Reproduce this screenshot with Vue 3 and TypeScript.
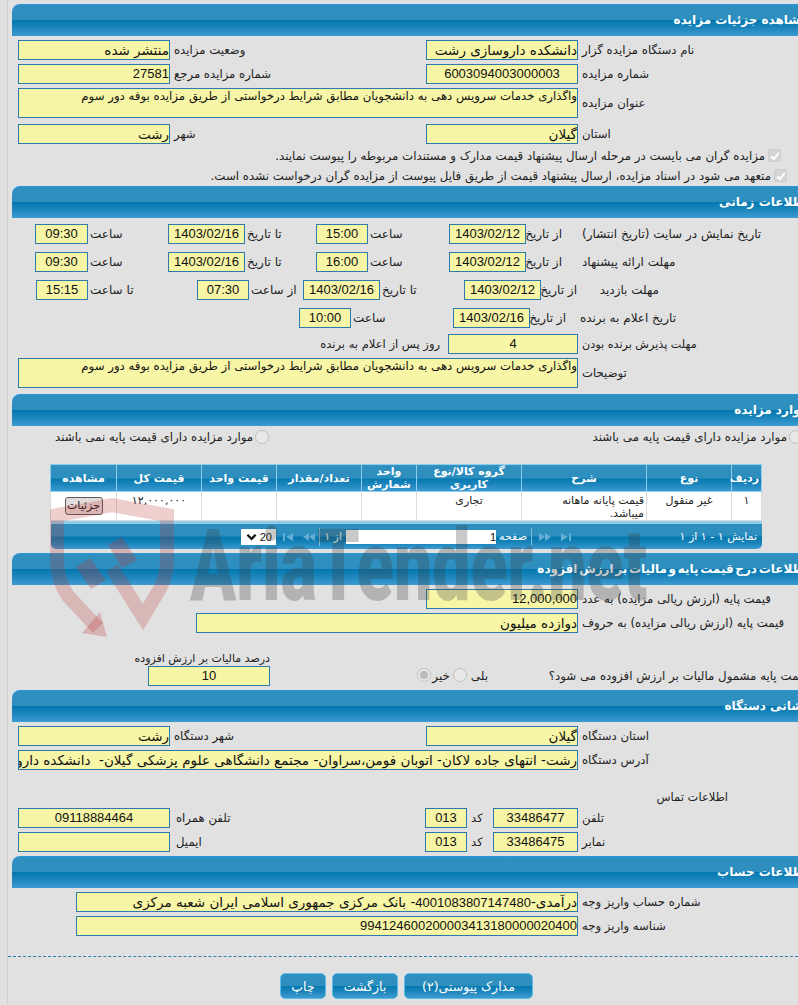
<script setup lang="ts">
const titleText = 'واگذاری خدمات سرویس دهی به دانشجویان مطابق شرایط درخواستی از طریق مزایده بوفه دور سوم'
const columns: string[] = ['ردیف', 'نوع', 'شرح', 'گروه کالا/نوع کاربری', 'واحد شمارش', 'تعداد/مقدار', 'قیمت واحد', 'قیمت کل', 'مشاهده']
</script>

<template>
  <div class="page" dir="rtl">
    <div class="rail"></div>

    <h2 class="hd first">مشاهده جزئیات مزایده</h2>
    <div class="row m4"><span class="lb">نام دستگاه مزایده گزار</span><span class="f w152">دانشکده داروسازی رشت</span><span class="lb w256">وضعیت مزایده</span><span class="f w152">منتشر شده</span></div>
    <div class="row m4"><span class="lb">شماره مزایده</span><span class="f w152 c num">6003094003000003</span><span class="lb w256">شماره مزایده مرجع</span><span class="f w152 num">27581</span></div>
    <div class="row m4"><span class="lb">عنوان مزایده</span><span class="f area w560">{{ titleText }}</span></div>
    <div class="row m6"><span class="lb">استان</span><span class="f w152">گیلان</span><span class="lb w256">شهر</span><span class="f w152">رشت</span></div>
    <div class="chk chk1"><span class="box"><svg viewBox="0 0 14 14" width="12" height="12"><path d="M2.5 7.5 L5.6 10.6 L11.5 3.4" fill="none" stroke="#fff" stroke-width="2.4" /></svg></span><span>مزایده گران می بایست در مرحله ارسال پیشنهاد قیمت مدارک و مستندات مربوطه را پیوست نمایند.</span></div>
    <div class="chk chk2"><span class="box"><svg viewBox="0 0 14 14" width="12" height="12"><path d="M2.5 7.5 L5.6 10.6 L11.5 3.4" fill="none" stroke="#fff" stroke-width="2.4" /></svg></span><span>متعهد می شود در اسناد مزایده، ارسال پیشنهاد قیمت از طریق فایل پیوست از مزایده گران درخواست نشده است.</span></div>

    <h2 class="hd">اطلاعات زمانی</h2>
    <div class="tr m6"><span class="lb t1">تاریخ نمایش در سایت (تاریخ انتشار)</span><span class="lb w36">از تاریخ</span><span class="f w77 c num">1403/02/12</span><span class="lb w81">ساعت</span><span class="f w52 c num">15:00</span><span class="lb w71">تا تاریخ</span><span class="f w77 c num">1403/02/16</span><span class="lb w80">ساعت</span><span class="f w53 c num">09:30</span></div>
    <div class="tr m8"><span class="lb t1">مهلت ارائه پیشنهاد</span><span class="lb w36">از تاریخ</span><span class="f w77 c num">1403/02/12</span><span class="lb w81">ساعت</span><span class="f w52 c num">16:00</span><span class="lb w71">تا تاریخ</span><span class="f w77 c num">1403/02/16</span><span class="lb w80">ساعت</span><span class="f w53 c num">09:30</span></div>
    <div class="tr m8 tr3"><span class="lb t3">مهلت بازدید</span><span class="lb w36">از تاریخ</span><span class="f w77 c num">1403/02/12</span><span class="lb w84">تا تاریخ</span><span class="f w77 c num">1403/02/16</span><span class="lb w54">از ساعت</span><span class="f w52 c num">07:30</span><span class="lb w109">تا ساعت</span><span class="f w52 c num">15:15</span></div>
    <div class="tr m8 tr4"><span class="lb t4">تاریخ اعلام به برنده</span><span class="lb w36">از تاریخ</span><span class="f w77 c num">1403/02/16</span><span class="lb w102">ساعت</span><span class="f w52 c num">10:00</span></div>
    <div class="tr m6 tr5"><span class="lb t5">مهلت پذیرش برنده بودن</span><span class="f w130 c num">4</span><span class="lb after">روز پس از اعلام به برنده</span></div>
    <div class="row m4"><span class="lb">توضیحات</span><span class="f area w560">{{ titleText }}</span></div>

    <h2 class="hd m6">موارد مزایده</h2>
    <div class="radios">
      <label class="rad-item edge"><span class="radio"></span><span>موارد مزایده دارای قیمت پایه می باشند</span></label>
      <label class="rad-item"><span class="radio"></span><span>موارد مزایده دارای قیمت پایه نمی باشند</span></label>
    </div>

    <div class="grid-wrap">
      <table class="grid">
        <colgroup>
          <col class="c1" /><col class="c2" /><col class="c3" /><col class="c4" /><col class="c5" /><col class="c6" /><col class="c7" /><col class="c8" /><col class="c9" />
        </colgroup>
        <thead>
          <tr><th v-for="c in columns" :key="c">{{ c }}</th></tr>
        </thead>
        <tbody>
          <tr>
            <td>۱</td>
            <td>غیر منقول</td>
            <td class="desc">قیمت پایانه ماهانه میباشد.</td>
            <td>تجاری</td>
            <td></td>
            <td></td>
            <td></td>
            <td>۱۲,۰۰۰,۰۰۰</td>
            <td class="btn-cell"><button class="mini" type="button">جزئیات</button></td>
          </tr>
        </tbody>
      </table>
      <div class="pager">
        <span class="pg-info">نمایش ۱ - ۱ از ۱</span>
        <svg class="pg-ic ic1" viewBox="0 0 10 8" width="10" height="8"><path d="M0 0 L7 4 L0 8 Z M8 0 H10 V8 H8 Z" /></svg>
        <svg class="pg-ic ic2" viewBox="0 0 12 8" width="12" height="8"><path d="M0 0 L6 4 L0 8 Z M6 0 L12 4 L6 8 Z" /></svg>
        <span class="sep"></span>
        <span class="pg-word">صفحه</span>
        <span class="pg-input num">1</span>
        <span class="pg-of">از ۱</span>
        <span class="sep sep2"></span>
        <svg class="pg-ic ic3" viewBox="0 0 12 8" width="12" height="8"><path d="M12 0 L6 4 L12 8 Z M6 0 L0 4 L6 8 Z" /></svg>
        <svg class="pg-ic ic4" viewBox="0 0 10 8" width="10" height="8"><path d="M10 0 L3 4 L10 8 Z M0 0 H2 V8 H0 Z" /></svg>
        <span class="pg-select">
          <span class="pg-num num">20</span>
          <svg viewBox="0 0 12 8" width="11" height="8"><path d="M1.5 1.5 L6 6 L10.5 1.5" fill="none" stroke="#111" stroke-width="2.4" /></svg>
        </span>
      </div>
    </div>

    <h2 class="hd m5 tight">اطلاعات درج قیمت پایه و مالیات بر ارزش افزوده</h2>
    <div class="row m4 pl426"><span class="lb">قیمت پایه (ارزش ریالی مزایده) به عدد</span><span class="f w152 num">12,000,000</span></div>
    <div class="row m4 pl196"><span class="lb">قیمت پایه (ارزش ریالی مزایده) به حروف</span><span class="f w382">دوازده میلیون</span></div>
    <div class="taxrow">
      <span class="q">قیمت پایه مشمول مالیات بر ارزش افزوده می شود؟</span>
      <span class="opt opt1">بلی</span><span class="radio"></span>
      <span class="opt opt2">خیر</span><span class="radio on"></span>
      <div class="taxcol">
        <span class="taxlb">درصد مالیات بر ارزش افزوده</span>
        <span class="f w122 c num">10</span>
      </div>
    </div>

    <h2 class="hd m4">نشانی دستگاه</h2>
    <div class="row m4"><span class="lb">استان دستگاه</span><span class="f w152">گیلان</span><span class="lb w256">شهر دستگاه</span><span class="f w152">رشت</span></div>
    <div class="row m4"><span class="lb">آدرس دستگاه</span><span class="f w560 clip">رشت- انتهای جاده لاکان- اتوبان فومن،سراوان- مجتمع دانشگاهی علوم پزشکی گیلان-&nbsp; دانشکده داروسازی</span></div>
    <div class="contact">اطلاعات تماس</div>
    <div class="row m4"><span class="lb">تلفن</span><span class="f w85 c num">33486477</span><span class="lb w26">کد</span><span class="f w42 c num">013</span><span class="lb w255">تلفن همراه</span><span class="f w152 c num">09118884464</span></div>
    <div class="row m4"><span class="lb">نمابر</span><span class="f w85 c num">33486475</span><span class="lb w26">کد</span><span class="f w42 c num">013</span><span class="lb w255">ایمیل</span><span class="f w152"></span></div>

    <h2 class="hd m4">اطلاعات حساب</h2>
    <div class="row m4 pl76"><span class="lb">شماره حساب واریز وجه</span><span class="f w502">درآمدی-<span class="num">4001083807147480</span>- بانک مرکزی جمهوری اسلامی ایران شعبه مرکزی</span></div>
    <div class="row m4 pl76"><span class="lb">شناسه واریز وجه</span><span class="f w502 num">994124600200003413180000020400</span></div>

    <div class="dash"></div>
    <div class="actions">
      <button class="act a1" type="button">مدارک پیوستی(۲)</button>
      <button class="act a2" type="button">بازگشت</button>
      <button class="act a3" type="button">چاپ</button>
    </div>

    <div class="wm" aria-hidden="true">
      <svg class="wm-logo" viewBox="0 0 798 1005" width="798" height="1005">
        <path d="M98 628 L68 596 Q57 580 57 560 L57 515 L112 505 L167 515 L167 560 Q167 580 155 597 L143 617 L112 568" fill="none" stroke="rgba(190,50,50,.24)" stroke-width="14" />
        <path d="M100 612 L107 637 L82 633 Z" fill="rgba(190,50,50,.26)" />
        <path d="M108 545 L122 537 L137 560 L122 568 Z M76 567 L90 558 L106 580 L91 589 Z" fill="rgba(190,50,50,.28)" />
      </svg>
      <span class="wm-text" dir="ltr">AriaTender.net</span>
    </div>
  </div>
</template>

<style>
html, body { margin: 0; background: #e1e1e1; }
</style>

<style scoped>
.page {
  position: relative;
  width: 798px;
  height: 1005px;
  overflow: hidden;
  background: #e1e1e1;
  font-family: "DejaVu Sans", sans-serif;
  font-size: 12px;
  color: #222;
  padding-top: 4px;
  box-sizing: border-box;
}
.rail { position: absolute; left: 7px; top: 0; bottom: 0; width: 1px; background: #cdcdcd; }

.hd {
  height: 32px;
  margin: 0 -12px 0 0;
  margin-left: 12px;
  padding: 0 2px 0 0;
  box-sizing: border-box;
  border-top: 1px solid #2a97dd;
  border-top-left-radius: 8px;
  background: linear-gradient(#2f90c0 0, #2e8ebd 49%, #0378b0 50%, #1f87bd 75%, #3d9bd2 100%);
  color: #fff;
  font-size: 12px;
  font-weight: bold;
  line-height: 31px;
  white-space: nowrap;
}
.tight { word-spacing: -2.5px; }
.m4 { margin-top: 4px; }
.m5 { margin-top: 5px; }
.m6 { margin-top: 6px; }
.m8 { margin-top: 8px; }

.row, .tr { display: flex; justify-content: flex-end; align-items: center; }
.row { padding-left: 18px; }
.tr { padding-left: 35px; }
.tr3 { padding-left: 36px; }
.tr4 { padding-left: 299px; }
.tr5 { padding-left: 321px; }
.pl426 { padding-left: 426px; }
.pl196 { padding-left: 196px; }
.pl76 { padding-left: 76px; }

.lb { text-align: left; padding-left: 4px; white-space: nowrap; box-sizing: border-box; flex: none; font-size: 11.7px; }
.tr .lb { font-size: 12px; padding-left: 2px; }
.f {
  flex: none;
  height: 20px;
  box-sizing: border-box;
  border: 1px solid #2a7aab;
  background: #f7f5a6;
  color: #111;
  font-size: 13.5px;
  line-height: 18px;
  white-space: nowrap;
  overflow: hidden;
  text-align: right;
}
.c { text-align: center; }
.num { font-family: "Liberation Sans", sans-serif; font-size: 13px; }
.area { height: 30px; line-height: 15px; font-size: 11.75px; white-space: normal; }
.clip { text-overflow: clip; }

.w26 { width: 26px; }
.w36 { width: 36px; }
.w42 { width: 42px; }
.w52 { width: 52px; }
.w53 { width: 53px; }
.w54 { width: 54px; }
.w71 { width: 71px; }
.w77 { width: 77px; }
.w80 { width: 80px; }
.w81 { width: 81px; }
.w84 { width: 84px; }
.w85 { width: 85px; }
.w102 { width: 102px; }
.w109 { width: 109px; }
.w122 { width: 122px; }
.w130 { width: 130px; }
.w152 { width: 152px; }
.w255 { width: 255px; padding-left: 6px; }
.w256 { width: 256px; }
.w382 { width: 382px; }
.w502 { width: 502px; }
.w560 { width: 560px; }

.tr .lb.t1 { padding-left: 20px; }
.tr .lb.t3 { width: 82px; text-align: right; padding: 0; }
.tr .lb.t4 { width: 110px; text-align: right; padding: 0; }
.tr .lb.t5 { padding-left: 4px; font-size: 11.2px; }
.tr .lb.after { width: 127px; text-align: right; padding: 0 8px 0 0; font-size: 11.5px; }

.chk { height: 19px; display: flex; align-items: center; gap: 3px; font-size: 11.8px; }
.chk1 { margin: 2px 17px 0 0; }
.chk2 { margin: 1px 11px 1px 0; }
.box { width: 13px; height: 13px; background: #d4d4d4; border: 1px solid #cdcdcd; border-radius: 2px; display: flex; align-items: center; justify-content: center; box-sizing: border-box; }
.box svg { flex: none; }

.radios { display: flex; justify-content: space-between; align-items: center; height: 16px; margin-top: 3px; padding-left: 55px; font-size: 11.8px; }
.rad-item { display: flex; align-items: center; gap: 2px; }
.edge { margin-right: -5px; }
.radio { flex: none; display: inline-block; width: 12px; height: 12px; border-radius: 50%; background: #e8e8e8; border: 1px solid #c2c2c2; position: relative; }
.radio.on::after { content: ""; position: absolute; inset: 2px; border-radius: 50%; background: #bdbdbd; }

.grid-wrap { margin: 19px 36px 0 36px; margin-left: 51px; width: 711px; height: 84px; background: #e1e1e1; }
.grid { width: 711px; border-collapse: collapse; table-layout: fixed; background: #fff; }
.c1 { width: 30px; }
.c2 { width: 85px; }
.c3 { width: 125px; }
.c4 { width: 105px; }
.c5 { width: 55px; }
.c6 { width: 85px; }
.c7 { width: 75px; }
.c8 { width: 85px; }
.c9 { width: 66px; }
.grid th {
  height: 27px;
  padding: 0 2px;
  box-sizing: border-box;
  border: 1px solid #8fcdec;
  background: linear-gradient(#2f90c0 0, #2e8ebd 49%, #0378b0 50%, #1f87bd 75%, #3d9bd2 100%);
  color: #fff;
  font-size: 11px;
  font-weight: bold;
  line-height: 13px;
  text-align: center;
}
.grid td {
  height: 29px;
  padding: 2px 2px 0;
  box-sizing: border-box;
  border: 1px solid #dcdcdc;
  font-size: 11px;
  line-height: 13px;
  text-align: center;
  vertical-align: top;
}
.grid td.desc { text-align: right; padding-left: 14px; }
.grid td.btn-cell { vertical-align: middle; padding: 0; }
.mini {
  width: 38px;
  height: 18px;
  padding: 0;
  border: 1px solid #5a5a5a;
  border-radius: 3px;
  background: #e4dcdc;
  font-family: "DejaVu Sans", sans-serif;
  font-size: 11px;
  line-height: 14px;
  color: #111;
}
.pager {
  height: 28px;
  box-sizing: border-box;
  border-top: 3px solid #8fcdec;
  border-bottom-left-radius: 5px;
  border-bottom-right-radius: 5px;
  background: linear-gradient(#2f90c0 0, #2e8ebd 45%, #0378b0 55%, #1f87bd 80%, #3d9bd2 100%);
  color: #fff;
  display: flex;
  align-items: center;
  font-size: 11px;
  padding-right: 5px;
}
.pg-info { width: 186px; flex: none; white-space: nowrap; }
.pg-ic { flex: none; fill: #64aed5; }
.ic2 { margin-right: 10px; }
.sep { flex: none; width: 1px; height: 18px; background: #7fbcdc; margin-right: 7px; }
.pg-word { margin-right: 4px; width: 29px; flex: none; white-space: nowrap; }
.pg-input { flex: none; width: 150px; height: 14px; margin-right: 2px; background: #fff; color: #111; font-size: 11px; line-height: 14px; text-align: right; }
.pg-of { flex: none; width: 22px; margin-right: 4px; white-space: nowrap; }
.sep2 { margin-right: 0; }
.ic3 { margin-right: 4px; }
.ic4 { margin-right: 10px; }
.pg-select { flex: none; width: 35px; height: 16px; margin-right: 7px; background: #fff; display: flex; align-items: center; justify-content: space-between; padding: 0 4px 0 5px; box-sizing: border-box; }
.pg-num { font-size: 11px; color: #111; }

.taxrow { display: flex; align-items: flex-end; height: 34px; margin-top: 19px; margin-right: -10px; }
.q { flex: none; width: 320px; white-space: nowrap; height: 16px; line-height: 16px; margin-bottom: 2px; font-size: 11.8px; }
.opt { flex: none; height: 16px; line-height: 16px; margin-bottom: 2px; white-space: nowrap; }
.opt1 { width: 19px; }
.opt2 { width: 17px; margin-right: 3px; }
.taxrow .radio { margin: 0 2px 4px 0; }
.taxcol { flex: none; margin-right: 147px; display: flex; flex-direction: column; width: 135px; }
.taxlb { height: 14px; line-height: 14px; white-space: nowrap; font-size: 11px; }

.contact { margin-top: 20px; height: 14px; line-height: 14px; padding-right: 70px; font-size: 11.5px; }

.dash { margin: 20px 0 0 8px; border-top: 1px dashed #2a80b5; }
.actions { display: flex; margin-top: 16px; padding-right: 265px; gap: 6px; }
.act {
  flex: none;
  height: 26px;
  padding: 0;
  border: 1px solid #5bbce8;
  border-radius: 5px;
  background: linear-gradient(#2f90c0 0, #2e8ebd 49%, #0378b0 50%, #1f87bd 75%, #3d9bd2 100%);
  color: #fff;
  font-family: "DejaVu Sans", sans-serif;
  font-size: 12.5px;
}
.a1 { width: 129px; }
.a2 { width: 66px; }
.a3 { width: 46px; }

.wm { position: absolute; inset: 0; pointer-events: none; }
.wm-logo { position: absolute; left: 0; top: 0; }
.wm-text {
  position: absolute;
  left: 190px;
  top: 507px;
  font-family: Roboto, sans-serif;
  font-weight: 900;
  font-size: 100px;
  line-height: 118px;
  color: rgba(60, 60, 60, .28);
  white-space: nowrap;
  transform: scaleX(.68);
  transform-origin: left center;
}
</style>
